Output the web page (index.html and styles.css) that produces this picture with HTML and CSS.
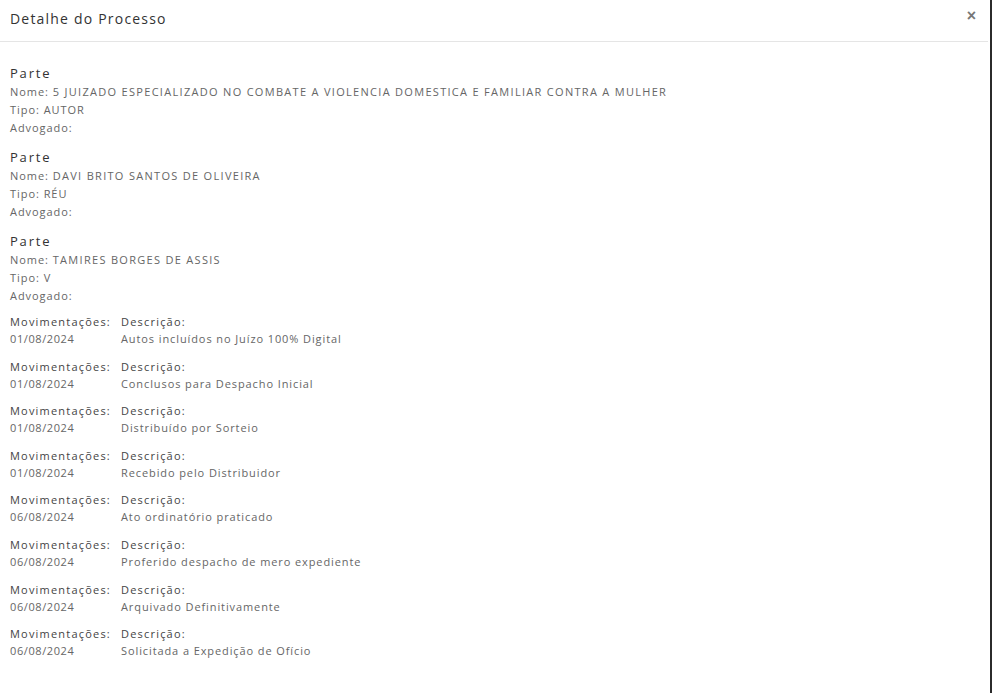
FILE: index.html
```html
<!DOCTYPE html>
<html lang="pt-BR">
<head>
<meta charset="utf-8">
<title>Detalhe do Processo</title>
<link rel="stylesheet" href="styles.css">
</head>
<body>
<div class="modal">
  <div class="modal-header">
    <h4 class="modal-title">Detalhe do Processo</h4>
    <button class="close" type="button" aria-label="Fechar">×</button>
  </div>
  <div class="modal-body">
    <div class="parte">
      <div class="parte-title">Parte</div>
      <div class="line">Nome: <span class="caps">5 JUIZADO ESPECIALIZADO NO COMBATE A VIOLENCIA DOMESTICA E FAMILIAR CONTRA A MULHER</span></div>
      <div class="line">Tipo: AUTOR</div>
      <div class="line">Advogado:</div>
    </div>
    <div class="parte">
      <div class="parte-title">Parte</div>
      <div class="line">Nome: <span class="caps">DAVI BRITO SANTOS DE OLIVEIRA</span></div>
      <div class="line">Tipo: RÉU</div>
      <div class="line">Advogado:</div>
    </div>
    <div class="parte last">
      <div class="parte-title">Parte</div>
      <div class="line">Nome: <span class="caps">TAMIRES BORGES DE ASSIS</span></div>
      <div class="line">Tipo: V</div>
      <div class="line">Advogado:</div>
    </div>

    <div class="mov">
      <div class="mov-label">Movimentações:</div><div class="mov-label">Descrição:</div>
      <div class="mov-value date">01/08/2024</div><div class="mov-value">Autos incluídos no Juízo 100% Digital</div>
    </div>
    <div class="mov">
      <div class="mov-label">Movimentações:</div><div class="mov-label">Descrição:</div>
      <div class="mov-value date">01/08/2024</div><div class="mov-value">Conclusos para Despacho Inicial</div>
    </div>
    <div class="mov">
      <div class="mov-label">Movimentações:</div><div class="mov-label">Descrição:</div>
      <div class="mov-value date">01/08/2024</div><div class="mov-value">Distribuído por Sorteio</div>
    </div>
    <div class="mov">
      <div class="mov-label">Movimentações:</div><div class="mov-label">Descrição:</div>
      <div class="mov-value date">01/08/2024</div><div class="mov-value">Recebido pelo Distribuidor</div>
    </div>
    <div class="mov">
      <div class="mov-label">Movimentações:</div><div class="mov-label">Descrição:</div>
      <div class="mov-value date">06/08/2024</div><div class="mov-value">Ato ordinatório praticado</div>
    </div>
    <div class="mov">
      <div class="mov-label">Movimentações:</div><div class="mov-label">Descrição:</div>
      <div class="mov-value date">06/08/2024</div><div class="mov-value">Proferido despacho de mero expediente</div>
    </div>
    <div class="mov">
      <div class="mov-label">Movimentações:</div><div class="mov-label">Descrição:</div>
      <div class="mov-value date">06/08/2024</div><div class="mov-value">Arquivado Definitivamente</div>
    </div>
    <div class="mov">
      <div class="mov-label">Movimentações:</div><div class="mov-label">Descrição:</div>
      <div class="mov-value date">06/08/2024</div><div class="mov-value">Solicitada a Expedição de Ofício</div>
    </div>
  </div>
</div>
</body>
</html>
```

FILE: styles.css
```css
html, body {
  margin: 0;
  padding: 0;
  height: 100%;
  background: #2b2b2b;
}
body {
  font-family: "Open Sans", "Liberation Sans", sans-serif;
  color: #555;
}
.modal {
  width: 990px;
  min-height: 693px;
  background: #fff;
  box-sizing: border-box;
}
.modal-header {
  display: flex;
  justify-content: space-between;
  align-items: center;
  height: 42px;
  box-sizing: border-box;
  border-bottom: 1px solid #e5e5e5;
  padding: 0 12px 0 10px;
  margin-right: 2px;
}
.modal-title {
  margin: 0;
  font-size: 14px;
  font-weight: 400;
  color: #333;
  letter-spacing: 1.2px;
  padding-bottom: 5px;
}
.close {
  border: 0;
  background: none;
  padding: 0;
  font-size: 16px;
  font-weight: 700;
  line-height: 1;
  color: #777;
  font-family: "Liberation Sans", sans-serif;
  padding-bottom: 9px;
}
.modal-body {
  padding: 21px 10px 20px;
}
.parte {
  margin-bottom: 10px;
}
.parte.last {
  margin-bottom: 8px;
}
.parte-title {
  font-size: 13px;
  line-height: 20px;
  color: #333;
  letter-spacing: 1.8px;
}
.line {
  font-size: 11px;
  line-height: 18px;
  color: #666;
  letter-spacing: 0.95px;
}
.line .caps {
  letter-spacing: 1.3px;
}
.mov {
  display: grid;
  grid-template-columns: 111px auto;
  justify-content: start;
  margin-bottom: 10.6px;
}
.mov-label {
  font-size: 11px;
  line-height: 17px;
  color: #444;
  letter-spacing: 1.2px;
}
.mov-value {
  font-size: 11px;
  line-height: 17px;
  color: #666;
  letter-spacing: 0.9px;
}
.mov-value.date {
  letter-spacing: 0.6px;
}
```
